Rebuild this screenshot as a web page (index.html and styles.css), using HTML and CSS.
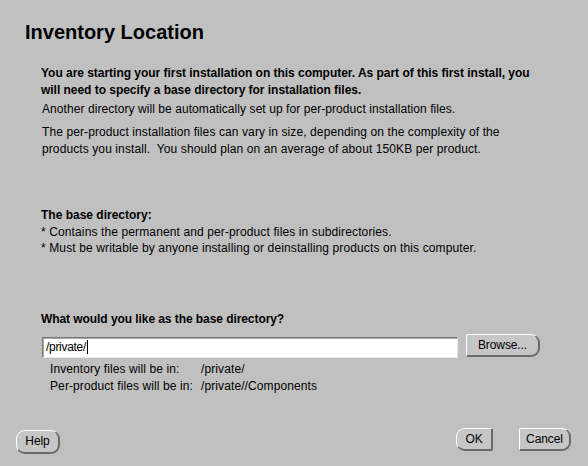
FILE: index.html
```html
<!DOCTYPE html>
<html>
<head>
<meta charset="utf-8">
<link rel="stylesheet" href="styles.css">
</head>
<body>
<div class="page">
  <h1 class="title">Inventory Location</h1>
  <div class="content">
    <p class="intro">You are starting your first installation on this computer. As part of this first install, you will need to specify a base directory for installation files.</p>
    <p class="another">Another directory will be automatically set up for per-product installation files.</p>
    <p class="size">The per-product installation files can vary in size, depending on the complexity of the products you install.&nbsp; You should plan on an average of about 150KB per product.</p>
    <div class="base">
      <div class="base-head">The base directory:</div>
      <div class="base-line">* Contains the permanent and per-product files in subdirectories.</div>
      <div class="base-line">* Must be writable by anyone installing or deinstalling products on this computer.</div>
    </div>
    <div class="question">What would you like as the base directory?</div>
    <div class="dir-row">
      <div class="field"><span class="field-text">/private/</span><span class="caret"></span></div>
      <div class="btn btn-right browse">Browse...</div>
    </div>
    <div class="paths">
      <div class="path-row"><span class="path-label">Inventory files will be in:</span><span class="path-value">/private/</span></div>
      <div class="path-row"><span class="path-label">Per-product files will be in:</span><span class="path-value">/private//Components</span></div>
    </div>
  </div>
  <div class="footer">
    <div class="btn btn-both help">Help</div>
    <div class="footer-right">
      <div class="btn btn-left ok">OK</div>
      <div class="btn btn-right cancel">Cancel</div>
    </div>
  </div>
</div>
</body>
</html>
```
FILE: styles.css
```css
html, body {
  margin: 0;
  padding: 0;
  background: #c0c0c0;
}
body {
  width: 588px;
  height: 466px;
  overflow: hidden;
  font-family: "Liberation Sans", Arial, sans-serif;
  color: #000;
}
.page {
  height: 466px;
  display: flex;
  flex-direction: column;
  box-sizing: border-box;
}
.title {
  margin: 20px 0 0 25px;
  font-size: 20px;
  line-height: 24px;
  font-weight: bold;
}
.content {
  padding-left: 41px;
  width: 500px;
}
.intro {
  margin: 21px 0 0 0;
  font-size: 12px;
  font-weight: bold;
  line-height: 17px;
  letter-spacing: -0.03px;
}
.another {
  margin: 2px 0 0 1px;
  font-size: 12px;
  line-height: 17px;
  letter-spacing: 0.07px;
}
.size {
  margin: 6px 0 0 1px;
  font-size: 12px;
  line-height: 16.5px;
  letter-spacing: 0.1px;
  width: 470px;
}
.base {
  margin-top: 50px;
  font-size: 12px;
  line-height: 16.5px;
}
.base-head {
  font-weight: bold;
}
.base-line {
  letter-spacing: 0.12px;
}
.question {
  margin-top: 54px;
  font-size: 12px;
  font-weight: bold;
  line-height: 17px;
  letter-spacing: -0.07px;
}
.dir-row {
  margin-top: 6px;
  display: flex;
  align-items: flex-start;
  gap: 8px;
}
.field {
  margin-top: 3px;
  margin-left: 1px;
  width: 416px;
  height: 21px;
  box-sizing: border-box;
  background: #fff;
  border-top: 1px solid #7a7a7a;
  border-left: 1px solid #7a7a7a;
  border-right: 1px solid #e8e8e8;
  border-bottom: 1px solid #e8e8e8;
  box-shadow: inset 1px 1px 0 #a8a8a8;
  display: flex;
  align-items: center;
  padding-left: 3px;
  font-size: 12px;
  letter-spacing: -0.3px;
}
.caret {
  display: inline-block;
  width: 1px;
  height: 14px;
  background: #000;
  margin-left: 1px;
}
.btn {
  box-sizing: border-box;
  height: 23px;
  background: #c6c6c6;
  border-top: 1px solid #fff;
  border-left: 1px solid #fff;
  border-right: 2px solid #6a6a6a;
  border-bottom: 2px solid #6a6a6a;
  font-size: 12px;
  line-height: 20px;
  text-align: center;
  letter-spacing: -0.1px;
}
.btn-right { border-radius: 2px 9px 9px 2px; }
.btn-left { border-radius: 9px 2px 2px 9px; }
.btn-both { border-radius: 9px; }
.browse {
  width: 74px;
}
.paths {
  margin-top: 3px;
  padding-left: 9px;
  font-size: 12px;
  line-height: 17px;
  letter-spacing: 0.1px;
}
.path-row {
  display: flex;
}
.path-label {
  width: 151px;
}
.footer {
  margin-top: auto;
  margin-bottom: 12px;
  display: flex;
  justify-content: space-between;
  align-items: flex-end;
  padding: 0 17px 0 16px;
}
.help {
  width: 44px;
  height: 24px;
  line-height: 21px;
}
.footer-right {
  display: flex;
  gap: 26px;
  margin-bottom: 3px;
}
.ok { width: 37px; }
.cancel { width: 52px; }
```
